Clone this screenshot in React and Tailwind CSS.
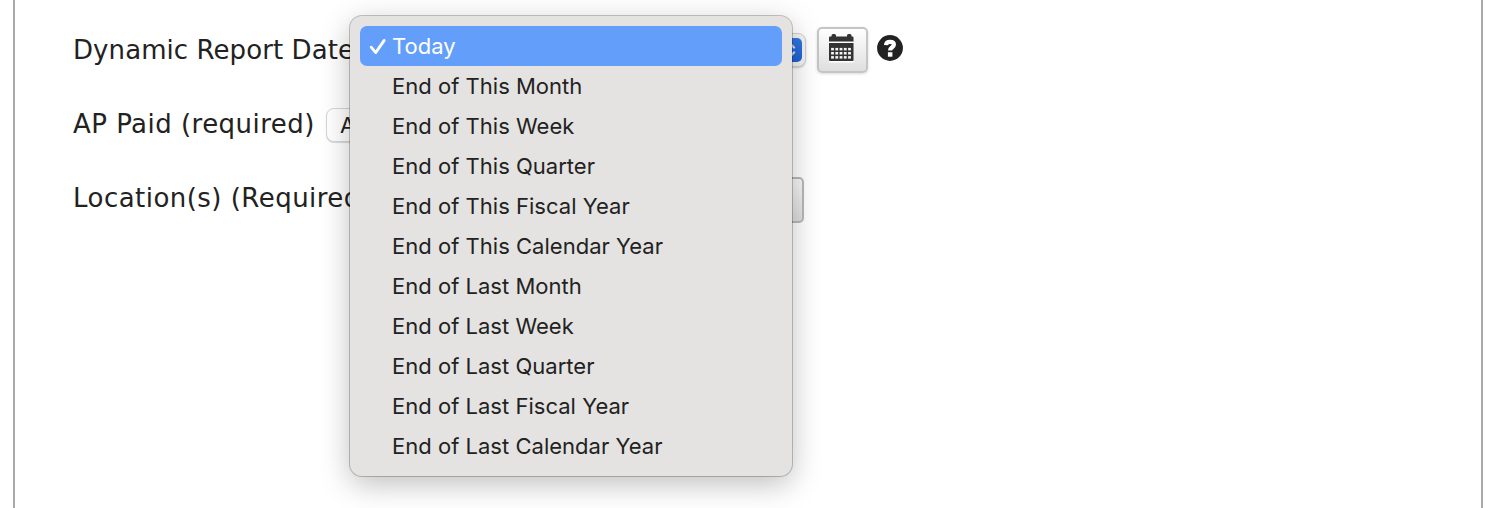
const options = [
  "Today",
  "End of This Month",
  "End of This Week",
  "End of This Quarter",
  "End of This Fiscal Year",
  "End of This Calendar Year",
  "End of Last Month",
  "End of Last Week",
  "End of Last Quarter",
  "End of Last Fiscal Year",
  "End of Last Calendar Year",
];

const cells = [0, 1, 2].flatMap((r) => [0, 1, 2, 3, 4].map((c) => [2.1 + c * 4.25, 13.9 + r * 4.1]));

function Label({ children, wide }) {
  return (
    <span
      className={
        wide
          ? "block whitespace-nowrap font-['DejaVu_Sans',sans-serif] text-[26px] leading-[34px] tracking-[0.47px] text-[#222]"
          : "block whitespace-nowrap font-['DejaVu_Sans',sans-serif] text-[26px] leading-[34px] tracking-[0.08px] text-[#222]"
      }
    >
      {children}
    </span>
  );
}

function CalendarIcon() {
  return (
    <svg width="25" height="29" viewBox="0 0 25 29" aria-hidden="true">
      <path d="M0 27h24.5v1.500H0z" fill="#fff" />
      <path d="M0 3.500a1 1 0 0 1 1-1h1.500V1.500Q2.500 0 4 0h1.500Q7 0 7 1.500v1h11v-1Q18 0 19.500 0H21q1.500 0 1.500 1.500v1h1a1 1 0 0 1 1 1v4.200H0z" fill="#333" />
      <path d="M0 7.700h24.500v1.300H0z" fill="#fff" />
      <path d="M0 9h24.500V26a1 1 0 0 1-1 1H1a1 1 0 0 1-1-1z" fill="#333" />
      {cells.map(([x, y]) => (
        <rect key={`${x}-${y}`} x={x} y={y} width="2.800" height="2.500" fill="#f4f4f4" />
      ))}
    </svg>
  );
}

function HelpIcon() {
  return (
    <svg width="26" height="26" viewBox="0 0 26 26" aria-hidden="true">
      <circle cx="13" cy="13" r="12.900" fill="#222" />
      <path d="M9 10.200C9.200 7.700 10.600 6.900 13 6.900c2.500 0 3.900.9 3.900 2.700 0 2.700-3.800 2.600-3.800 5.900" fill="none" stroke="#fff" strokeWidth="4.200" />
      <path d="M10.900 17.200h4.500v4.500h-4.500z" fill="#fff" />
    </svg>
  );
}

export default function App() {
  return (
    <div className="relative h-[508px] w-[1502px] overflow-hidden bg-white pl-[13px]">
      <main className="h-full w-[1470px] border-x-2 border-[#a9a9a9] pl-[58px] pt-[13px]">
        <div className="flex h-[74px] items-center">
          <div className="w-[287px]">
            <Label>Dynamic Report Date</Label>
          </div>
          <div className="flex h-[34px] w-[446px] items-center justify-end rounded-lg border border-[#d2d2d2] bg-[#f4f4f4] pr-[3px] shadow-[0_1px_2px_rgba(0,0,0,0.2)]">
            <span className="flex h-6 w-6 items-center justify-center rounded-[5px] bg-gradient-to-b from-[#3177e2] to-[#1e62d3]">
              <svg width="12" height="16" viewBox="0 0 12 16" fill="none" stroke="#d5e2f8" strokeWidth="2.400" strokeLinecap="round" strokeLinejoin="round">
                <path d="m2 5.500 4-4 4 4M2 10.500l4 4 4-4" />
              </svg>
            </span>
          </div>
          <button className="ml-[11px] flex h-[46px] w-[51px] items-start justify-center rounded-[5px] border-2 border-[#c5c5c5] bg-gradient-to-b from-white to-[#dfdfdf] pr-[2px] pt-[5px] shadow-[0_1px_3px_rgba(0,0,0,0.15)]">
            <CalendarIcon />
          </button>
          <span className="mb-[4px] ml-[9px]">
            <HelpIcon />
          </span>
        </div>
        <div className="flex h-[74px] items-center">
          <div className="w-[253px]">
            <Label wide>AP Paid (required)</Label>
          </div>
          <div className="mt-[2px] flex h-[34px] w-[200px] items-center rounded-lg border border-[#d6d6d6] bg-white pl-[13px] font-['Inter',sans-serif] text-[22px] text-[#222] shadow-[0_1px_1px_rgba(0,0,0,0.15)]">
            All
          </div>
        </div>
        <div className="flex h-[74px] items-center">
          <div className="w-[340px]">
            <Label wide>Location(s) (Required)</Label>
          </div>
          <button className="mt-[4px] h-[46px] w-[391px] rounded-[5px] border-2 border-[#b8b8b8] bg-gradient-to-b from-[#f8f8f8] to-[#dedede]" />
        </div>
      </main>

      <ul className="absolute left-[350px] top-4 h-[460px] w-[442px] rounded-xl bg-[#e4e3e1] px-[10px] py-[10px] shadow-[0_0_0_1px_rgba(0,0,0,0.22),0_8px_30px_rgba(0,0,0,0.26)]">
        {options.map((option, i) => (
          <li
            key={option}
            className={
              i === 0
                ? "flex h-10 items-center rounded-[7px] bg-[#639ffa] text-white"
                : "flex h-10 items-center text-[#222]"
            }
          >
            <span className="flex w-8 items-center pl-[9px]">
              {i === 0 && (
                <svg width="18" height="18" viewBox="0 0 18 18" fill="none" stroke="white" strokeWidth="2.800" strokeLinecap="round" strokeLinejoin="round">
                  <path d="m2.200 10.200 4.500 5.400L15.200 3.400" />
                </svg>
              )}
            </span>
            <span className="whitespace-nowrap font-['Inter',sans-serif] text-[22px] leading-[28px] tracking-[0.02px]">{option}</span>
          </li>
        ))}
      </ul>
    </div>
  );
}
